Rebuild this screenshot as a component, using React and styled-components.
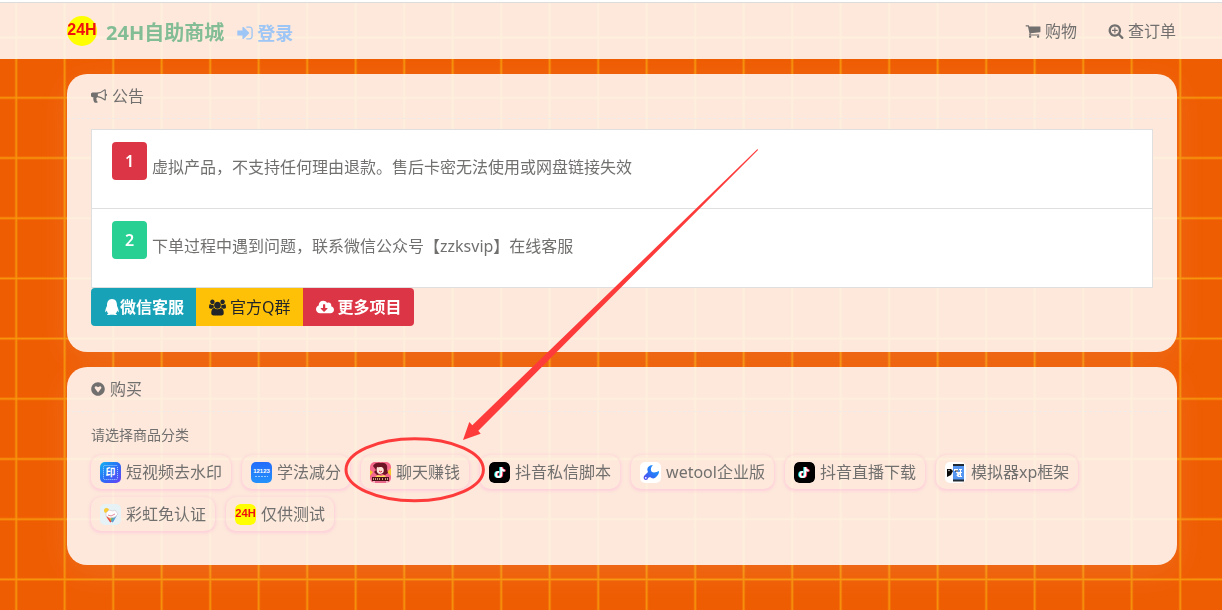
import React, { useState } from "react";
import styled, { createGlobalStyle } from "styled-components";
import { FaQq, FaCloudDownloadAlt, FaGratipay, FaTiktok } from "react-icons/fa";

const GlobalStyle = createGlobalStyle`
	* {
		box-sizing: border-box;
	}

	body {
		margin: 0;
		background: #ef5d03;
		color: #71706f;
		font-family: "Noto Sans", "Noto Sans CJK SC", sans-serif;
		font-size: 16px;
		line-height: 24px;
	}
`;

const Wallpaper = styled.svg`
	position: fixed;
	inset: 0;
	width: 100%;
	height: 100%;
	z-index: -1;
`;

const Page = styled.div`
	position: relative;
	min-height: 100vh;
	overflow: hidden;
`;

const TopEdge = styled.div`
	height: 3px;
	background: #fff;
	border-bottom: 1px solid #dcdcdc;
`;

const Navbar = styled.header`
	display: flex;
	align-items: center;
	justify-content: space-between;
	height: 56px;
	padding: 0 46px 0 67px;
	background: rgba(255, 255, 255, 0.86);
`;

const NavGroup = styled.nav`
	display: flex;
	align-items: center;
	gap: ${({ $gap }) => $gap}px;
`;

const Brand = styled.a`
	display: flex;
	align-items: center;
	gap: 9px;
	color: #82bd95;
	font-size: 20px;
	font-weight: bold;
	line-height: 24px;
	text-decoration: none;

	span {
		padding-top: 4px;
	}
`;

const LoginLink = styled.a`
	display: flex;
	align-items: center;
	gap: 3px;
	padding-top: 4px;
	color: #9dc6f6;
	font-size: 18px;
	font-weight: bold;
	text-decoration: none;
`;

const NavLink = styled.a`
	display: flex;
	align-items: center;
	gap: 4px;
	color: inherit;
	text-decoration: none;
`;

const Main = styled.main`
	display: flex;
	flex-direction: column;
	gap: 15px;
	padding: 15px 45px 45px 67px;
`;

const Card = styled.section`
	background: rgba(255, 255, 255, 0.86);
	border-radius: 20px;
	box-shadow: 0 8px 30px rgba(240, 240, 250, 0.1);
`;

const CardTitle = styled.h2`
	display: flex;
	align-items: center;
	gap: 5px;
	height: 45px;
	margin: 0;
	padding: 0 24px;
	border-bottom: 1px dashed #efebe9;
	font-size: 16px;
	font-weight: 400;
`;

const CardBody = styled.div`
	padding: ${({ $top }) => $top}px 24px ${({ $bottom }) => $bottom}px;
`;

const NoticeList = styled.ul`
	margin: 0;
	padding: 0;
	list-style: none;
	background: #fff;
	border: 1px solid #dfdfdf;
	border-bottom: 0;
`;

const NoticeItem = styled.li`
	display: flex;
	align-items: flex-end;
	gap: 5px;
	padding: 12px 20px 28px;
	border-bottom: 1px solid #dfdfdf;
	line-height: 26px;
`;

const NoticeNumber = styled.span`
	flex: none;
	width: 35px;
	border-radius: 4px;
	background: ${({ $color }) => $color};
	color: #fff;
	font-weight: 600;
	line-height: 38px;
	text-align: center;
`;

const ButtonGroup = styled.div`
	display: flex;
	width: fit-content;
	border-radius: 4px;
	overflow: hidden;
`;

const ContactButton = styled.button`
	display: flex;
	align-items: center;
	gap: ${({ $gap }) => $gap}px;
	height: 38px;
	padding: 0 12px 0 13px;
	border: 0;
	background: ${({ $color }) => $color};
	color: ${({ $dark }) => ($dark ? "#212529" : "#fff")};
	font: inherit;
	font-weight: ${({ $dark }) => ($dark ? 400 : 700)};
	cursor: pointer;
`;

const FieldLabel = styled.p`
	margin: 0 0 8px;
	font-size: 14px;
`;

const CategoryList = styled.div`
	display: flex;
	flex-wrap: wrap;
	gap: 8px 11px;
`;

const CategoryButton = styled.button`
	display: flex;
	align-items: center;
	gap: 5px;
	height: 34px;
	padding: 0 9px;
	border: 0;
	border-radius: 10px;
	background: transparent;
	box-shadow: 0 1px 3px 1px rgba(255, 184, 220, 0.5);
	color: inherit;
	font: inherit;
	cursor: pointer;
`;

const Tile = styled.span`
	display: flex;
	align-items: center;
	justify-content: center;
	width: 21px;
	height: 21px;
	border-radius: 5px;
	overflow: hidden;
`;

const Marker = styled.svg`
	position: absolute;
	top: 0;
	left: 0;
	width: 800px;
	height: 520px;
	pointer-events: none;
`;

const ICONS = {
	signIn: "M1312 896q0 26-19 45l-544 544q-19 19-45 19t-45-19-19-45v-288h-448q-26 0-45-19t-19-45v-384q0-26 19-45t45-19h448v-288q0-26 19-45t45-19 45 19l544 544q19 19 19 45zm352-352v704q0 119-84.5 203.5t-203.5 84.5h-320q-13 0-22.5-9.5t-9.5-22.5q0-4-1-20t-.5-26.5 3-23.5 10-19.5 20.5-6.5h320q66 0 113-47t47-113v-704q0-66-47-113t-113-47h-312l-11.5-1-11.5-3-8-5.5-7-9-2-13.5q0-4-1-20t-.5-26.5 3-23.5 10-19.5 20.5-6.5h320q119 0 203.5 84.5t84.5 203.5z",
	cart: "M704 1536q0 52-38 90t-90 38-90-38-38-90 38-90 90-38 90 38 38 90zm896 0q0 52-38 90t-90 38-90-38-38-90 38-90 90-38 90 38 38 90zm128-1088v512q0 24-16.5 42.5t-40.5 21.5l-1044 122q13 60 13 70 0 16-24 64h920q26 0 45 19t19 45-19 45-45 19h-1024q-26 0-45-19t-19-45q0-11 8-31.5t16-36 21.5-40 15.5-29.5l-177-823h-204q-26 0-45-19t-19-45 19-45 45-19h256q16 0 28.5 6.5t19.5 15.5 13 24.5 8 26 5.5 29.5 4.5 26h1201q26 0 45 19t19 45z",
	searchPlus: "M1088 800v64q0 13-9.5 22.5t-22.5 9.5h-224v224q0 13-9.5 22.5t-22.5 9.5h-64q-13 0-22.5-9.5t-9.5-22.5v-224h-224q-13 0-22.5-9.5t-9.5-22.5v-64q0-13 9.5-22.5t22.5-9.5h224v-224q0-13 9.5-22.5t22.5-9.5h64q13 0 22.5 9.5t9.5 22.5v224h224q13 0 22.5 9.5t9.5 22.5zm128 32q0-185-131.5-316.5t-316.5-131.5-316.5 131.5-131.5 316.5 131.5 316.5 316.5 131.5 316.5-131.5 131.5-316.5zm512 832q0 53-37.5 90.5t-90.5 37.5q-54 0-90-38l-343-342q-179 124-399 124-143 0-273.5-55.5t-225-150-150-225-55.5-273.5 55.5-273.5 150-225 225-150 273.5-55.5 273.5 55.5 225 150 150 225 55.5 273.5q0 220-124 399l343 343q37 37 37 90z",
	bullhorn: "M1664 640q53 0 90.5 37.5t37.5 90.5-37.5 90.5-90.5 37.5v384q0 52-38 90t-90 38q-417-347-812-380-58 19-91 66t-31 100.5 40 92.5q-20 33-23 65.5t6 58 33.5 55 48 50 61.5 50.5q-29 58-111.5 83t-168.5 11.5-132-55.5q-7-23-29.5-87.5t-32-94.5-23-89-15-101 3.5-98.5 22-110.5h-122q-66 0-113-47t-47-113v-192q0-66 47-113t113-47h480q435 0 896-384 52 0 90 38t38 90v384zm-128 604v-954q-394 302-768 343v270q377 42 768 341z",
	users: "M593 896q-162 5-265 128h-134q-82 0-138-40.5t-56-118.5q0-353 124-353 6 0 43.5 21t97.5 42.5 119 21.5q67 0 133-23-5 37-5 66 0 139 81 256zm1071 637q0 120-73 189.5t-194 69.5h-874q-121 0-194-69.5t-73-189.5q0-53 3.5-103.5t14-109 26.5-108.5 43-97.5 62-81 85.5-53.5 111.5-20q10 0 43 21.5t73 48 107 48 135 21.5 135-21.5 107-48 73-48 43-21.5q61 0 111.5 20t85.5 53.5 62 81 43 97.5 26.5 108.5 14 109 3.5 103.5zm-1024-1277q0 106-75 181t-181 75-181-75-75-181 75-181 181-75 181 75 75 181zm704 384q0 159-112.5 271.5t-271.5 112.5-271.5-112.5-112.5-271.5 112.5-271.5 271.5-112.5 271.5 112.5 112.5 271.5zm576 225q0 78-56 118.5t-138 40.5h-134q-103-123-265-128 81-117 81-256 0-29-5-66 66 23 133 23 59 0 119-21.5t97.5-42.5 43.5-21q124 0 124 353zm-128-609q0 106-75 181t-181 75-181-75-75-181 75-181 181-75 181 75 75 181z",
};

function Icon({ name, size, box = 1792 }) {
	return (
		<svg width={size} height={size} viewBox={`0 0 ${box} 1792`} fill="currentColor" aria-hidden="true">
			<path d={ICONS[name]} />
		</svg>
	);
}

function Logo24({ size, round }) {
	return (
		<svg width={size} height={size} viewBox="0 0 30 30" aria-hidden="true">
			<rect width="30" height="30" rx={round ? 15 : 8} fill="#ffff00" />
			<text x="15" y="19" textAnchor="middle" fontFamily="Liberation Sans, sans-serif" fontWeight="bold" fontSize="16" fill="#f01010">
				24H
			</text>
		</svg>
	);
}

function WatermarkIcon() {
	return (
		<svg width="21" height="21" viewBox="0 0 21 21" aria-hidden="true">
			<defs>
				<linearGradient id="wm" x1="0" y1="0" x2="1" y2="1">
					<stop offset="0" stopColor="#12b5f0" />
					<stop offset="0.5" stopColor="#2a6cf6" />
					<stop offset="1" stopColor="#6a40f5" />
				</linearGradient>
			</defs>
			<rect width="21" height="21" fill="url(#wm)" />
			<rect x="3.5" y="3.5" width="14" height="14" rx="1" fill="none" stroke="#a5d4ff" strokeDasharray="1 1" />
			<text x="10.5" y="14" textAnchor="middle" fontFamily="Noto Sans CJK SC, sans-serif" fontWeight="bold" fontSize="10" fill="#fff">印</text>
		</svg>
	);
}

function TrafficIcon() {
	return (
		<svg width="21" height="21" viewBox="0 0 21 21" aria-hidden="true">
			<defs>
				<linearGradient id="tr" x1="0" y1="0" x2="0" y2="1">
					<stop offset="0" stopColor="#236cfa" />
					<stop offset="1" stopColor="#2492fb" />
				</linearGradient>
			</defs>
			<rect width="21" height="21" fill="url(#tr)" />
			<text x="10.5" y="11" textAnchor="middle" fontFamily="Liberation Sans, sans-serif" fontWeight="bold" fontSize="6" fill="#fff">12123</text>
			<path d="M4 14.5h13" stroke="#9acbff" strokeDasharray="2 1" />
		</svg>
	);
}

function ChatIcon() {
	return (
		<svg width="21" height="21" viewBox="0 0 21 21" aria-hidden="true">
			<rect width="21" height="21" fill="#f4688c" />
			<path d="M0 8l3 2-3 4zM21 6l-4 4 4 4z" fill="#f7c52d" />
			<path d="M3 4C4 1 8 0 11 1c5-1 7 3 6 6l1 4-3 2-3-1-5 1-3-3 2-2z" fill="#6d1326" />
			<path d="M7 5c3 1 4-1 6 1 2 3 0 6-3 6S6 9 7 5z" fill="#ffe2d6" />
			<path d="M9 9q2 2 3 0" stroke="#d8203b" fill="none" />
			<path d="M5 15l3-2 3 1 3-1 2 2z" fill="#ffdb54" />
			<path d="M2 15h17v4H2z" fill="#4b1218" />
			<path d="M3 17h7M12 17h2M15 17h3" stroke="#ffc9a0" strokeWidth="1.4" strokeDasharray="1 1" />
			<path d="M3 20h15" stroke="#fff" />
			<path d="M5 20h11" stroke="#d62255" />
		</svg>
	);
}

const NoteTile = styled(Tile)`
	background: #000;

	svg {
		width: 10px;
		height: 11px;
		color: #fff;
		filter: drop-shadow(-1px 0 0 #25f4ee) drop-shadow(1px 0 0 #fe2c55);
	}
`;

function WrenchIcon() {
	return (
		<svg width="21" height="21" viewBox="0 0 21 21" aria-hidden="true">
			<defs>
				<linearGradient id="wr" x1="0" y1="1" x2="1" y2="0">
					<stop offset="0" stopColor="#5a45ee" />
					<stop offset="0.5" stopColor="#2878f8" />
					<stop offset="1" stopColor="#23a6f8" />
				</linearGradient>
			</defs>
			<rect width="21" height="21" fill="#fff" />
			<path d="M13 3C9 3 6 6 8 10L4 14c-1 2 0 4 2 4 1 0 2-1 2-2l2-1c2 2 5 2 7-1 2-2 2-4 2-5-2 1-5 2-7 1-2-2-1-5 1-7z" fill="url(#wr)" />
			<circle cx="5.8" cy="15.8" r="0.9" fill="#fff" />
		</svg>
	);
}

function EmulatorIcon() {
	return (
		<svg width="21" height="21" viewBox="0 0 21 21" aria-hidden="true">
			<rect width="21" height="21" fill="#fff" />
			<rect x="8" y="2" width="11" height="17" fill="#5596f2" />
			<path d="M8 3h11M8 18.5h11" stroke="#202b35" strokeWidth="2" />
			<path d="M2 7h4l2 2-2 4-4 2z" fill="#0a0a0a" />
			<circle cx="4" cy="8.5" r="0.7" fill="#fff" />
			<path d="M9 8h3v2l2 2-2 2" stroke="#fff" strokeWidth="2" fill="none" />
			<path d="M10 9h3" stroke="#17202d" />
			<path d="M14 7.5h3M14 10.5h3M13 14.5h4M15.5 8v6" stroke="#fff" fill="none" />
		</svg>
	);
}

function RainbowIcon() {
	return (
		<svg width="21" height="21" viewBox="0 0 21 21" aria-hidden="true">
			<rect width="21" height="21" fill="#e6f2f6" />
			<circle cx="6.5" cy="6.5" r="2.5" fill="#f9ca32" />
			<path d="M7 12l4 6" stroke="#e94842" strokeWidth="2" />
			<path d="M9 12l3 5" stroke="#f49b30" strokeWidth="2" />
			<path d="M12 12v5" stroke="#65bd73" strokeWidth="2" />
			<path d="M16 11l-4 7" stroke="#5b9fd6" strokeWidth="2" />
			<path d="M6 9l3-3 4 1 2-1 3 4-3 3-5 1-4-2z" fill="#fff" stroke="#d5cbd1" strokeWidth="0.7" />
			<path d="M8 11l3 1 4-2" stroke="#e58b9b" fill="none" />
		</svg>
	);
}

const TiktokTile = () => (
	<NoteTile>
		<FaTiktok />
	</NoteTile>
);

const notices = [
	{ color: "#dc3545", text: "虚拟产品，不支持任何理由退款。售后卡密无法使用或网盘链接失效" },
	{ color: "#28d094", text: "下单过程中遇到问题，联系微信公众号【zzksvip】在线客服" },
];

const categories = [
	{ name: "短视频去水印", icon: <WatermarkIcon /> },
	{ name: "学法减分", icon: <TrafficIcon /> },
	{ name: "聊天赚钱", icon: <ChatIcon /> },
	{ name: "抖音私信脚本", icon: <TiktokTile /> },
	{ name: "wetool企业版", icon: <WrenchIcon /> },
	{ name: "抖音直播下载", icon: <TiktokTile /> },
	{ name: "模拟器xp框架", icon: <EmulatorIcon /> },
	{ name: "彩虹免认证", icon: <RainbowIcon /> },
	{ name: "仅供测试", icon: <Logo24 size={21} /> },
];

function Background() {
	return (
		<Wallpaper viewBox="0 0 1222 610" preserveAspectRatio="xMinYMin slice" aria-hidden="true">
			<defs>
				<pattern id="grid" x="-8" y="7.5" width="48.5" height="60.2" patternUnits="userSpaceOnUse">
					<path d="M24.2 0v60.2M0 30.1h48.5" stroke="#f48a0c" strokeWidth="2.4" strokeOpacity="0.75" />
					<path d="M24.2 0v60.2M0 30.1h48.5" stroke="#fba608" strokeWidth="1" strokeOpacity="0.6" />
				</pattern>
			</defs>
			<rect width="1222" height="610" fill="#ef5d03" />
			<rect width="1222" height="610" fill="url(#grid)" />
		</Wallpaper>
	);
}

function App() {
	const [category, setCategory] = useState(null);

	return (
		<Page>
			<GlobalStyle />
			<Background />
			<TopEdge />
			<Navbar>
				<NavGroup $gap={12}>
					<Brand href="#home">
						<Logo24 size={30} round />
						<span>24H自助商城</span>
					</Brand>
					<LoginLink href="#login">
						<Icon name="signIn" size={18} />
						登录
					</LoginLink>
				</NavGroup>
				<NavGroup $gap={31}>
					<NavLink href="#buy">
						<Icon name="cart" size={16} />
						购物
					</NavLink>
					<NavLink href="#orders">
						<Icon name="searchPlus" size={16} />
						查订单
					</NavLink>
				</NavGroup>
			</Navbar>

			<Main>
				<Card>
					<CardTitle>
						<Icon name="bullhorn" size={16} />
						公告
					</CardTitle>
					<CardBody $top={10} $bottom={26}>
						<NoticeList>
							{notices.map((notice, index) => (
								<NoticeItem key={notice.text}>
									<NoticeNumber $color={notice.color}>{index + 1}</NoticeNumber>
									<span>{notice.text}</span>
								</NoticeItem>
							))}
						</NoticeList>
						<ButtonGroup>
							<ContactButton $color="#17a2b8" $gap={0}>
								<FaQq size={16} />
								微信客服
							</ContactButton>
							<ContactButton $color="#ffc107" $gap={4} $dark>
								<Icon name="users" size={17} box={1920} />
								官方Q群
							</ContactButton>
							<ContactButton $color="#dc3545" $gap={4}>
								<FaCloudDownloadAlt size={18} />
								更多项目
							</ContactButton>
						</ButtonGroup>
					</CardBody>
				</Card>

				<Card id="buy">
					<CardTitle>
						<FaGratipay size={14} />
						购买
					</CardTitle>
					<CardBody $top={11} $bottom={34}>
						<FieldLabel id="category-label">请选择商品分类</FieldLabel>
						<CategoryList role="group" aria-labelledby="category-label">
							{categories.map((item) => (
								<CategoryButton
									key={item.name}
									aria-pressed={category === item.name}
									onClick={() => setCategory(item.name)}
								>
									<Tile>{item.icon}</Tile>
									{item.name}
								</CategoryButton>
							))}
						</CategoryList>
					</CardBody>
				</Card>
			</Main>

			<Marker viewBox="0 0 800 520" aria-hidden="true">
				<path d="M757.5 149L472.3 425.3L469.3 422L463 440L480.7 433.7L478.3 430.7L758 150Z" fill="#fe3b3b" />
				<ellipse cx="414.7" cy="469.8" rx="68.7" ry="31" fill="none" stroke="#fe3b3b" strokeWidth="3" />
			</Marker>
		</Page>
	);
}

export default App;
